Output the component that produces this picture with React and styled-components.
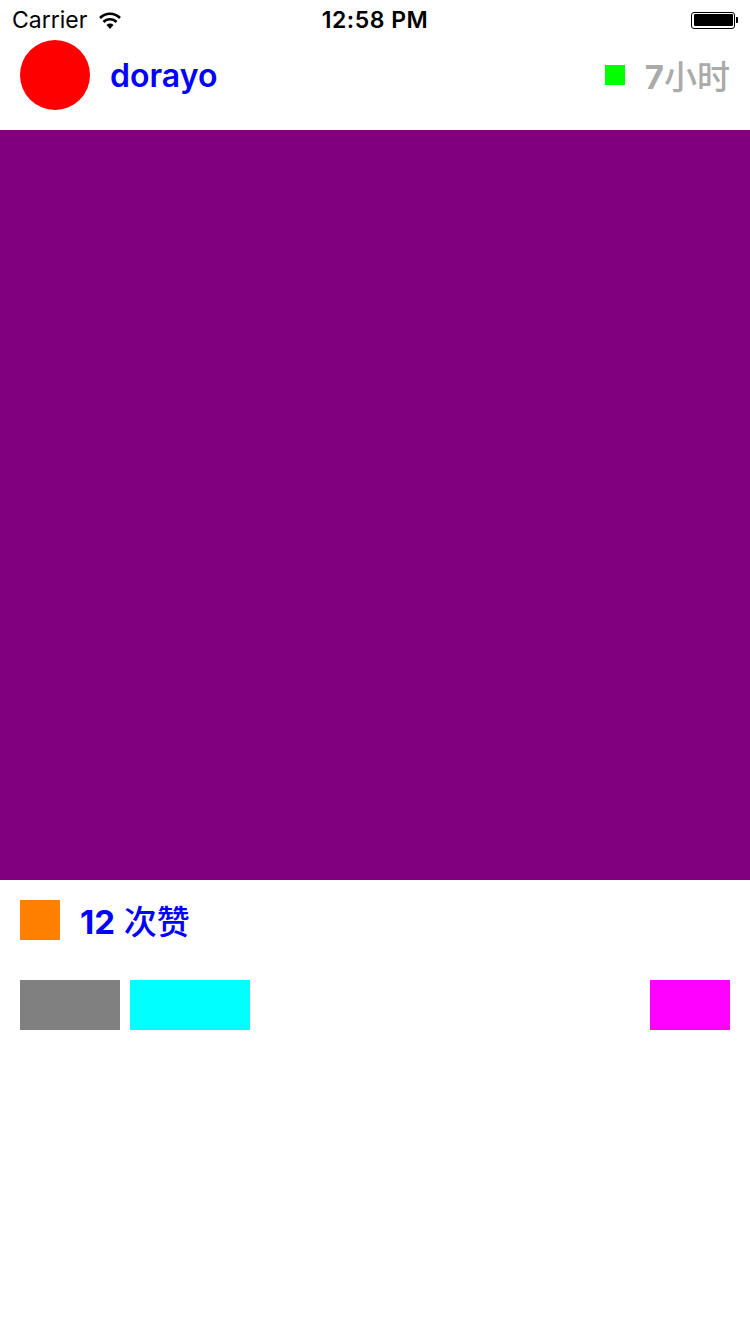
import React from 'react';
import styled, { createGlobalStyle } from 'styled-components';

const GlobalStyle = createGlobalStyle`
  html, body {
    margin: 0;
    padding: 0;
    background: #fff;
    font-family: 'Inter', 'Noto Sans', 'Noto Sans CJK SC', sans-serif;
  }
`;

const Page = styled.div`
  width: 750px;
  min-height: 1334px;
  background: #fff;
`;

const StatusBar = styled.div`
  height: 40px;
  display: grid;
  grid-template-columns: 1fr auto 1fr;
  align-items: center;
  padding: 0 12px;
  font-size: 23px;
  color: #000;
`;

const Carrier = styled.div`
  display: flex;
  align-items: center;
  gap: 10px;
`;

const Clock = styled.div`
  font-weight: 600;
  letter-spacing: 0.5px;
`;

const Battery = styled.div`
  justify-self: end;
  display: flex;
  align-items: center;
`;

const BatteryBody = styled.div`
  width: 44px;
  height: 17px;
  border: 1.5px solid #000;
  border-radius: 3px;
  padding: 1.5px;
  box-sizing: border-box;
  margin-right: 1px;

  &::after {
    content: '';
    display: block;
    width: 100%;
    height: 100%;
    background: #000;
    border-radius: 1px;
  }
`;

const BatteryTip = styled.div`
  width: 2px;
  height: 6px;
  background: #000;
  border-radius: 0 1px 1px 0;
`;

const Header = styled.div`
  height: 70px;
  padding: 0 20px 20px;
  display: flex;
  align-items: center;
`;

const Avatar = styled.div`
  width: 70px;
  height: 70px;
  border-radius: 50%;
  background: #ff0000;
  flex-shrink: 0;
`;

const Name = styled.div`
  margin-left: 20px;
  font-size: 32px;
  font-weight: 600;
  color: #0000ff;
  flex: 1;
`;

const Square = styled.div`
  width: ${({ size }) => size}px;
  height: ${({ size }) => size}px;
  background: ${({ color }) => color};
  flex-shrink: 0;
`;

const Label = styled.div`
  margin-left: 20px;
  font-size: 33px;
  font-weight: 500;
  color: ${({ color }) => color};
`;

const Num = styled.span`
  font-weight: 650;
`;

const Photo = styled.div`
  height: 750px;
  background: #800080;
`;

const LikeRow = styled.div`
  display: flex;
  align-items: center;
  padding: 20px 20px 0;
  height: 40px;
`;

const ActionRow = styled.div`
  display: flex;
  gap: 10px;
  padding: 40px 20px 0;
`;

const Block = styled.div`
  width: ${({ w }) => w}px;
  height: 50px;
  background: ${({ color }) => color};
  margin-left: ${({ push }) => (push ? 'auto' : '0')};
`;

function Wifi() {
  return (
    <svg width="26" height="20" viewBox="0 0 26 20">
      <path d="M13 19 L9.5 15 A5 5 0 0 1 16.5 15 Z" fill="#000" />
      <path d="M6.5 12 A9 9 0 0 1 19.5 12" stroke="#000" strokeWidth="2.6" fill="none" />
      <path d="M3 8 A14 14 0 0 1 23 8" stroke="#000" strokeWidth="2.6" fill="none" />
    </svg>
  );
}

export default function App() {
  return (
    <Page>
      <GlobalStyle />
      <StatusBar>
        <Carrier>
          Carrier
          <Wifi />
        </Carrier>
        <Clock>12:58 PM</Clock>
        <Battery>
          <BatteryBody />
          <BatteryTip />
        </Battery>
      </StatusBar>
      <Header>
        <Avatar />
        <Name>dorayo</Name>
        <Square size={20} color="#00ff00" />
        <Label color="#aaaaaa">
          <Num>7</Num>小时
        </Label>
      </Header>
      <Photo />
      <LikeRow>
        <Square size={40} color="#ff8000" />
        <Label color="#0000ff">
          <Num>12</Num> 次赞
        </Label>
      </LikeRow>
      <ActionRow>
        <Block w={100} color="#808080" />
        <Block w={120} color="#00ffff" />
        <Block w={80} color="#ff00ff" push />
      </ActionRow>
    </Page>
  );
}
